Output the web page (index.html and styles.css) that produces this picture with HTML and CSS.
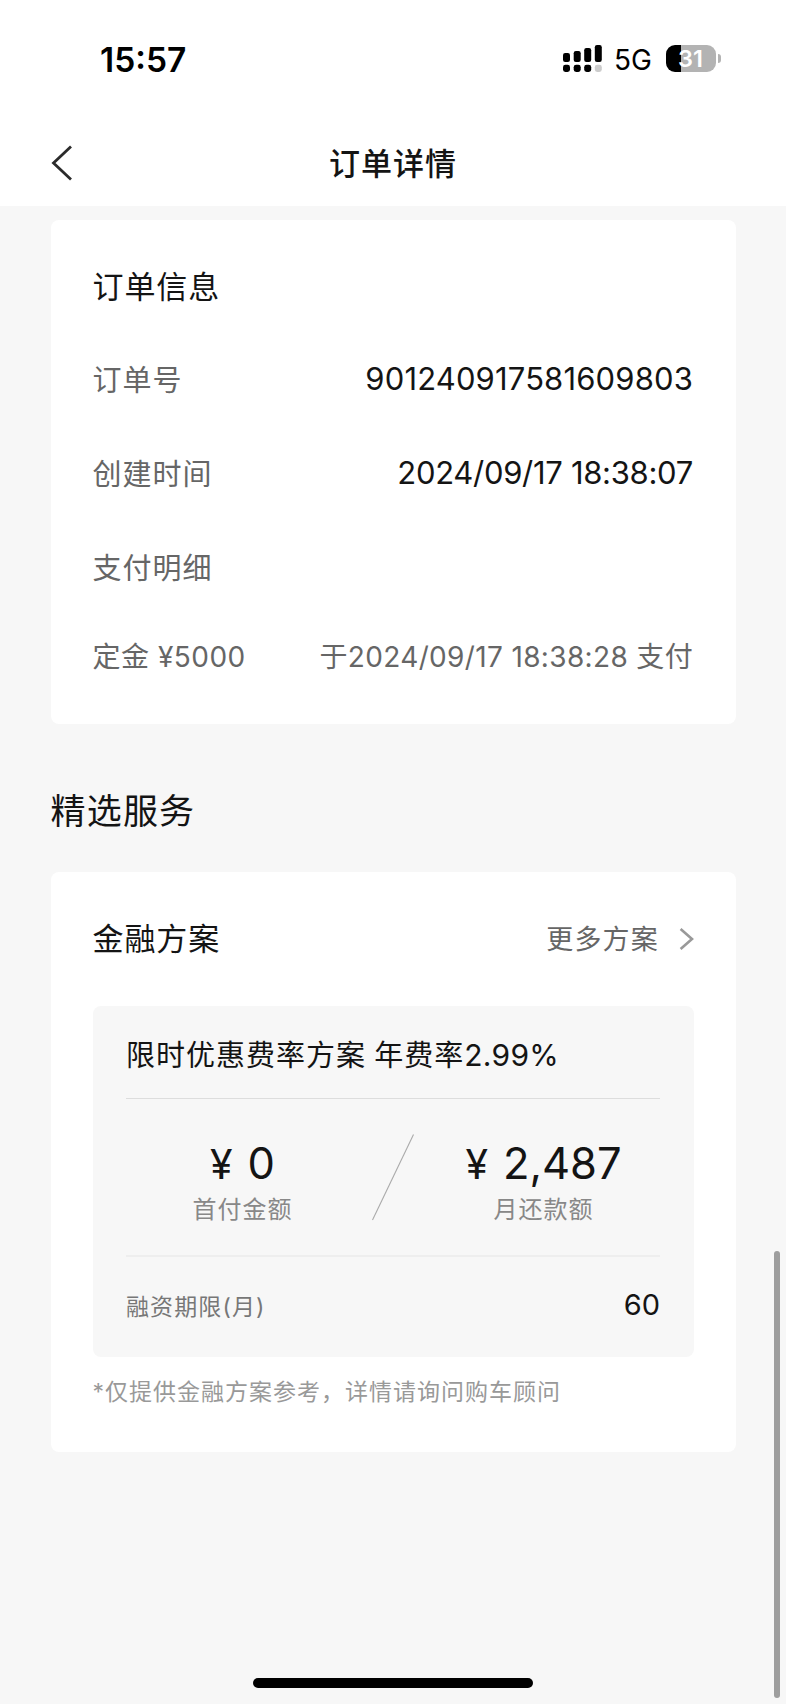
FILE: index.html
```html
<!DOCTYPE html>
<html lang="zh-CN">

<head>
  <meta charset="utf-8">
  <title>订单详情</title>
  <meta name="viewport" content="width=device-width, initial-scale=1.0">
  <link rel="stylesheet" href="styles.css">
</head>

<body>
  <header>
    <div class="status_bar">
      <span class="time">15:57</span>
      <div class="status_right">
        <svg class="signal" width="39" height="27" viewBox="0 0 39 27">
          <rect x="0" y="8" width="7" height="9" rx="2.2" />
          <rect x="10.7" y="6" width="7" height="11" rx="2.2" />
          <rect x="21.2" y="3" width="7" height="14" rx="2.2" />
          <rect x="31.8" y="0" width="7" height="17" rx="2.2" />
          <rect x="0" y="19.8" width="7" height="7.2" rx="2.4" />
          <rect x="10.7" y="19.8" width="7" height="7.2" rx="2.4" />
          <rect x="21.2" y="19.8" width="7" height="7.2" rx="2.4" />
          <rect x="31.8" y="19.8" width="7" height="7.2" rx="2.4" fill="#ccc" />
        </svg>
        <span class="network">5G</span>
        <div class="battery"><span>31</span></div>
      </div>
    </div>
    <nav>
      <svg class="back" width="24" height="36" viewBox="0 0 24 36">
        <path d="M22 1.5 L4.5 18 L22 34.5" fill="none" stroke="#2b2b2b" stroke-width="2.8" />
      </svg>
      <h1>订单详情</h1>
    </nav>
  </header>

  <main>
    <section class="card order">
      <h2>订单信息</h2>
      <div class="row">
        <span class="label">订单号</span>
        <span class="value number">901240917581609803</span>
      </div>
      <div class="row">
        <span class="label">创建时间</span>
        <span class="value date">2024/09/17 18:38:07</span>
      </div>
      <div class="row">
        <span class="label">支付明细</span>
      </div>
      <div class="row pay">
        <span class="amount">定金 ¥5000</span>
        <span class="paid">于2024/09/17 18:38:28 支付</span>
      </div>
    </section>

    <h2 class="section_title">精选服务</h2>

    <section class="card finance">
      <div class="card_head">
        <h2>金融方案</h2>
        <a class="more"><span>更多方案</span>
          <svg width="15" height="22" viewBox="0 0 15 22">
            <path d="M1.6 1 L13 11 L1.6 21" fill="none" stroke="#999" stroke-width="2.6" />
          </svg>
        </a>
      </div>
      <div class="plan">
        <p class="plan_name">限时优惠费率方案 年费率<span>2.99%</span></p>
        <div class="plan_price">
          <div class="price">
            <p class="money"><i>¥</i>0</p>
            <p class="desc">首付金额</p>
          </div>
          <svg class="slash" width="43" height="87" viewBox="0 0 43 87">
            <path d="M41.5 0.5 L0.5 86" stroke="#aaa" stroke-width="1.1" />
          </svg>
          <div class="price">
            <p class="money"><i>¥</i>2,487</p>
            <p class="desc">月还款额</p>
          </div>
        </div>
        <div class="plan_term">
          <span>融资期限(月)</span>
          <b>60</b>
        </div>
      </div>
      <p class="tip">*仅提供金融方案参考，详情请询问购车顾问</p>
    </section>
  </main>

  <div class="scrollbar"></div>
  <div class="home_bar"></div>
</body>

</html>
```

FILE: styles.css
```css
* {
  margin: 0;
  padding: 0;
  box-sizing: border-box;
}

body {
  width: 786px;
  height: 1704px;
  background: #f7f7f7;
  color: #141414;
  font-family: Inter, 'Noto Sans CJK SC', sans-serif;
  overflow: hidden;
  white-space: nowrap;
}

header {
  height: 206px;
  background: #fff;
}

.status_bar {
  display: flex;
  justify-content: space-between;
  align-items: center;
  height: 118px;
  padding: 0 65px 0 100px;
  color: #000;
}

.time {
  margin-top: 1px;
  font-size: 33.5px;
  font-weight: 600;
}

.status_right {
  display: flex;
  align-items: center;
}

.signal {
  margin-top: -1px;
}

.network {
  margin: 2px 14px 0 12px;
  font-size: 28px;
  font-weight: 400;
}

.battery {
  position: relative;
  width: 50px;
  height: 27px;
  margin: -1px 5px 0 0;
  padding-right: 1px;
  border-radius: 9px;
  background: linear-gradient(to right, #000 15px, #b3b3b3 15px);
  color: #fff;
  font-size: 23.5px;
  font-weight: 600;
  line-height: 27px;
  text-align: center;
}

.battery::after {
  content: "";
  position: absolute;
  right: -5px;
  top: 9px;
  width: 3px;
  height: 9px;
  border-radius: 0 4px 4px 0;
  background: #b3b3b3;
}

nav {
  display: flex;
  align-items: center;
  height: 88px;
  padding: 0 50px;
}

.back {
  margin: 1px 1px 0 -1px;
}

h1 {
  flex: 1;
  padding: 4px 24px 0 0;
  font-size: 31px;
  font-weight: 500;
  line-height: 44px;
  letter-spacing: 1px;
  text-align: center;
}

main {
  padding: 14px 50px 0 50.5px;
}

.card {
  padding: 0 42px;
  border-radius: 8px;
  background: #fff;
}

.order {
  height: 504px;
  padding-top: 45px;
}

h2 {
  font-size: 31px;
  font-weight: 400;
  line-height: 44px;
  letter-spacing: 0.9px;
}

.row {
  display: flex;
  justify-content: space-between;
  align-items: center;
  height: 94px;
}

.order h2 + .row {
  margin-top: 22px;
}

.label {
  color: #666;
  font-size: 29px;
  letter-spacing: 1px;
}

.value {
  margin-right: 1px;
  font-size: 31px;
}

.number {
  letter-spacing: 0.15px;
}

.date {
  letter-spacing: -0.3px;
}

.pay {
  height: 83px;
  color: #666;
  font-size: 28px;
}

.amount {
  letter-spacing: 0.5px;
}

.paid {
  margin-right: 1px;
  letter-spacing: 0.35px;
}

.section_title {
  margin-top: 61px;
  font-size: 35px;
  line-height: 52px;
  letter-spacing: 1.2px;
}

.finance {
  height: 580px;
  margin-top: 35px;
}

.card_head {
  display: flex;
  justify-content: space-between;
  align-items: center;
  height: 134px;
}

.more {
  display: flex;
  align-items: center;
  color: #666;
  font-size: 27px;
  letter-spacing: 1.2px;
}

.more span {
  margin-top: -3px;
}

.more svg {
  margin-left: 20px;
}

.plan {
  height: 351px;
  padding: 0 34px 0 33.5px;
  border-radius: 8px;
  background: #f7f7f7;
}

.plan_name {
  height: 93px;
  border-bottom: 1px solid #ddd;
  font-size: 29px;
  line-height: 98px;
  letter-spacing: 1px;
  word-spacing: -1px;
}

.plan_name span {
  font-size: 30px;
  letter-spacing: 0.3px;
}

.plan_price {
  display: flex;
  justify-content: space-between;
  height: 158px;
  padding-top: 35px;
  border-bottom: 2px solid #eee;
}

.price {
  width: 233px;
  text-align: center;
}

.money {
  margin-top: -1px;
  font-size: 43.5px;
  line-height: 60px;
}

.money i {
  margin-right: 15px;
  font-size: 41px;
  font-style: normal;
}

.desc {
  color: #888;
  font-size: 24px;
  line-height: 32px;
  letter-spacing: 1px;
}

.plan_term {
  display: flex;
  justify-content: space-between;
  align-items: center;
  height: 95px;
  color: #777;
  font-size: 23px;
  letter-spacing: 1.1px;
}

.plan_term b {
  color: #141414;
  font-size: 29px;
  font-weight: 400;
  letter-spacing: 0;
}

.tip {
  margin-top: 18px;
  color: #999;
  font-size: 23px;
  line-height: 34px;
  letter-spacing: 1px;
}

.scrollbar {
  position: absolute;
  top: 1251px;
  right: 6px;
  width: 6px;
  height: 447px;
  border-radius: 3px;
  background: #9e9e9e;
}

.home_bar {
  position: absolute;
  bottom: 16px;
  left: 253px;
  width: 280px;
  height: 10px;
  border-radius: 5px;
  background: #000;
}
```
